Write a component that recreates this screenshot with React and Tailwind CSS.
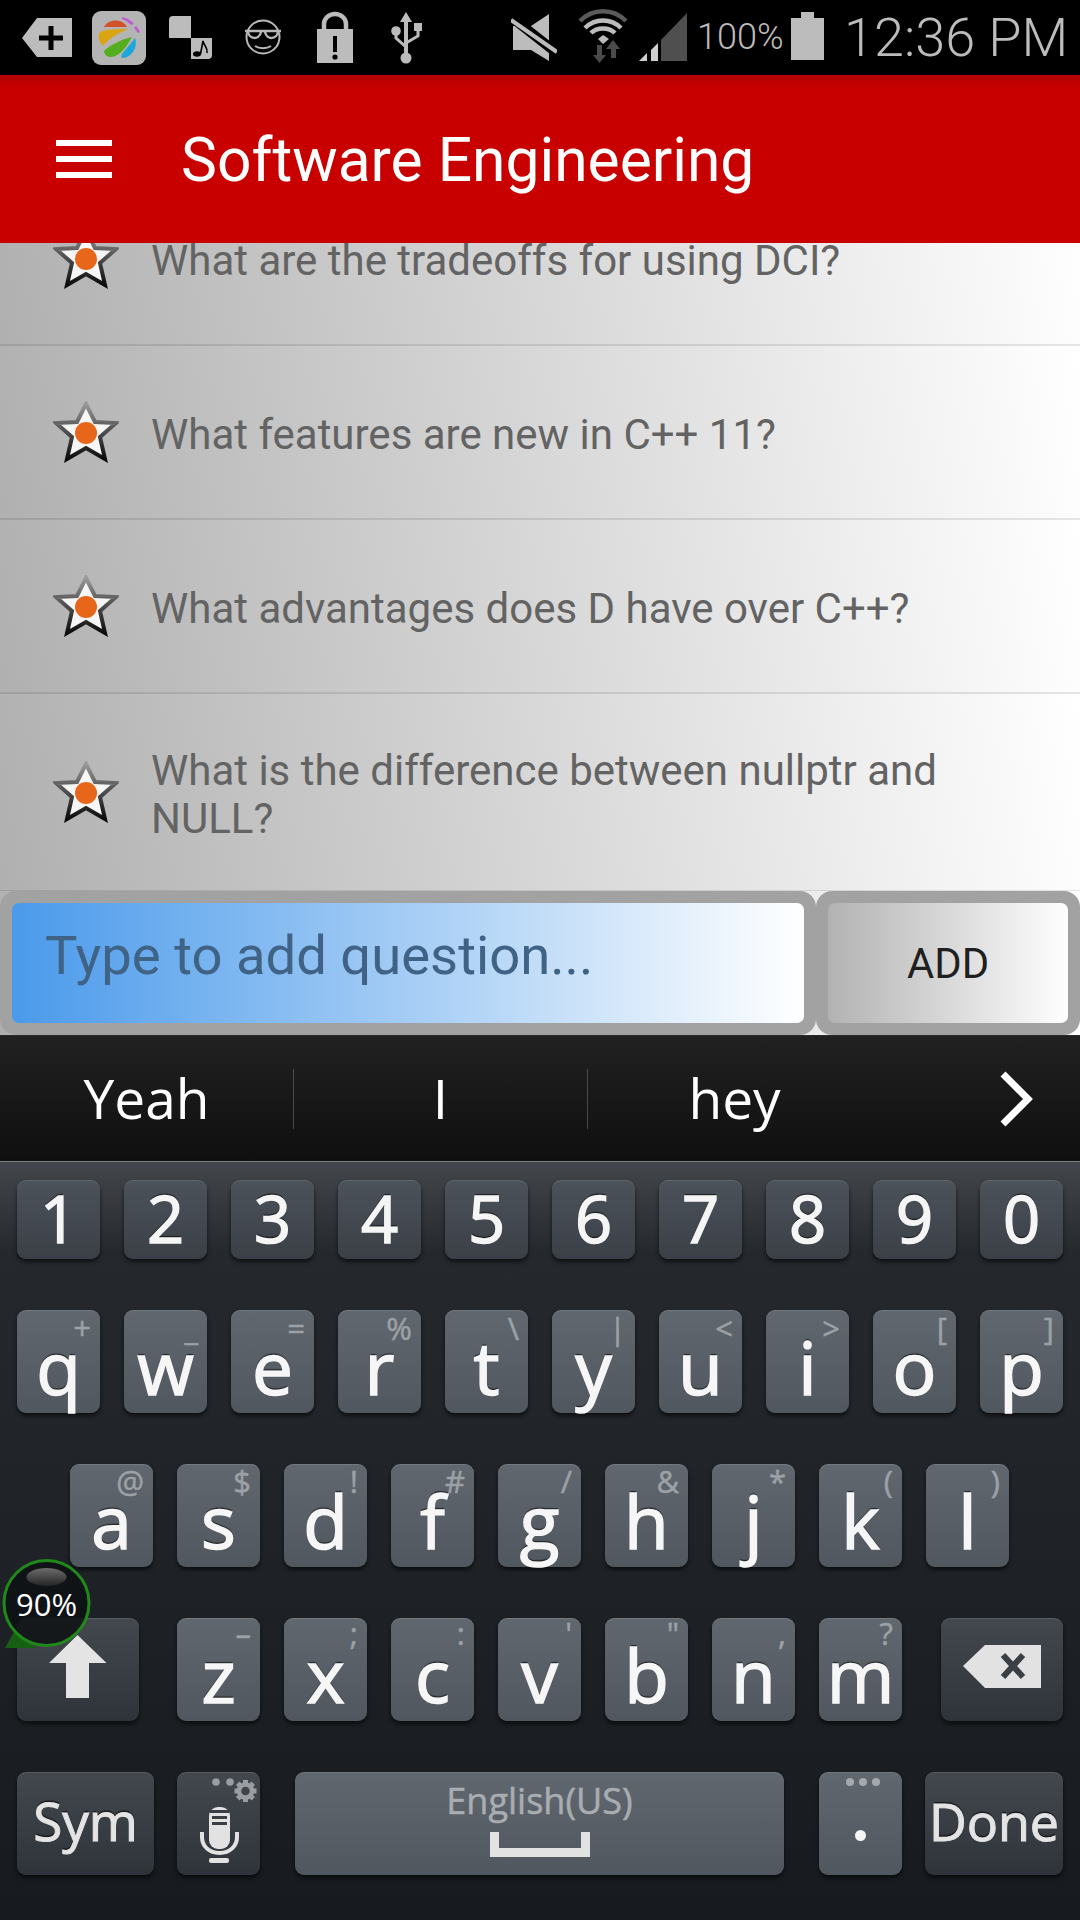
import React from "react";

const OPEN = "[font-family:'Open_Sans',sans-serif]";

function Star() {
  return (
    <svg width="66" height="62" viewBox="0 0 66 62" className="shrink-0 blur-[0.6px]">
      <defs>
        <linearGradient id="starEdge" x1="0" y1="0" x2="0" y2="1">
          <stop offset="0" stopColor="#9a9a9a" />
          <stop offset="0.45" stopColor="#555" />
          <stop offset="1" stopColor="#0c0c0c" />
        </linearGradient>
      </defs>
      <polygon
        points="33,3 42,21 63,22 47,36 52,58 33,47 14,58 19,36 3,22 24,21"
        fill="#f6f6f6"
        stroke="url(#starEdge)"
        strokeWidth="4"
        strokeLinejoin="miter"
      />
      <circle cx="33" cy="32" r="11" fill="#e8661a" />
    </svg>
  );
}

function Row({ children, className }) {
  return (
    <div className={"flex items-center shrink-0 border-b-2 border-black/10 bg-[linear-gradient(82deg,#b0b0b0,#ffffff)] " + className}>
      <div className="ml-[53px] mr-[32px]"><Star /></div>
      <div className="w-[810px] pt-[6px] text-[42px] leading-[48px] text-[#636363] [font-family:Roboto,sans-serif]">{children}</div>
    </div>
  );
}

const LETTER = "bg-[linear-gradient(#60676f,#50575e)]";
const NUM = "bg-[linear-gradient(#4c525a,#3b4047)]";
const FUNC = "bg-[linear-gradient(#43474e,#2f333a)]";
const KEYSHADOW = "shadow-[inset_0_1px_0_rgba(255,255,255,0.12),0_3px_4px_rgba(0,0,0,0.6)]";

function Digit({ c }) {
  return (
    <div className={`relative flex h-[79px] w-[83px] items-end justify-center rounded-[9px] pb-[8px] ${NUM} ${KEYSHADOW}`}>
      <span className={`${OPEN} text-[65px] leading-[65px] text-[#f5f5f5] [-webkit-text-stroke:1.5px_#f5f5f5] [text-shadow:0_-2px_1px_rgba(0,0,0,0.6)]`}>{c}</span>
    </div>
  );
}

function Letter({ c, h, top }) {
  return (
    <div className={`relative flex h-[103px] w-[83px] items-end justify-center rounded-[9px] pb-[10px] ${LETTER} ${KEYSHADOW}`}>
      <span className={`absolute right-[9px] ${top} ${OPEN} text-[31px] leading-[38px] text-[#9ca1a6] [-webkit-text-stroke:0.5px_#9ca1a6]`}>{h}</span>
      <span className={`relative ${OPEN} text-[73px] leading-[73px] text-[#f6f6f6] [-webkit-text-stroke:1.5px_#f6f6f6] [text-shadow:0_-2px_1px_rgba(0,0,0,0.6)]`}>{c}</span>
    </div>
  );
}

const row2 = [["q","+"],["w","_"],["e","="],["r","%"],["t","\\"],["y","|"],["u","<"],["i",">"],["o","["],["p","]"]];
const row3 = [["a","@"],["s","$"],["d","!"],["f","#"],["g","/"],["h","&"],["j","*"],["k","("],["l",")"]];
const row4 = [["z","–"],["x",";"],["c",":"],["v","'"],["b","\""],["n",","],["m","?"]];

function StatusIcons() {
  return (
    <>
      <svg width="50" height="75" viewBox="22 0 50 75" className="ml-[22px]">
        <polygon points="22,38 37,18 72,18 72,57 37,57" fill="#bcbcbc" />
        <path d="M39 38H63M51 26V50" stroke="#000" strokeWidth="5" />
      </svg>
      <svg width="54" height="75" viewBox="92 0 54 75" className="ml-[20px]">
        <rect x="92" y="11" width="54" height="54" rx="9" fill="#b4b4b4" />
        <path d="M104 27C108 19 122 18 127 27Z" fill="#d2532a" />
        <path d="M99 34C100 30 110 29 128 29C118 33 107 40 103 46C100 43 98 38 99 34Z" fill="#dba512" />
        <path d="M132 37C125 50 118 57 110 57C106 57 104 53 104 51C110 45 120 40 132 37Z" fill="#55ae1d" />
        <path d="M135 38C138 46 133 57 123 58C121 58 121 56 122 54C126 49 131 43 135 38Z" fill="#1fa6da" />
        <path d="M122 17C127 18 131 20 134 24L131 25C128 22 125 20 122 19Z" fill="#c25ad6" />
        <path d="M136 26C138 28 139 30 140 32L138 33L134 28Z" fill="#c25ad6" />
      </svg>
      <svg width="44" height="75" viewBox="169 0 44 75" className="ml-[23px]">
        <path d="M173 16H191V38H169V20A4 4 0 0 1 173 16Z" fill="#bcbcbc" />
        <path d="M191 38H212V55A4 4 0 0 1 208 59H191Z" fill="#bcbcbc" />
        <ellipse cx="197" cy="54" rx="4" ry="2.8" fill="#000" />
        <path d="M200.5 54L203 41C204 46 208 47 207 53" stroke="#000" strokeWidth="1.6" fill="none" />
      </svg>
      <svg width="38" height="75" viewBox="244 0 38 75" className="ml-[31px]">
        <circle cx="263" cy="37" r="16.5" fill="none" stroke="#b8b8b8" strokeWidth="2" />
        <path d="M245 31H281M248 31C248 39 259 41 261 32M265 32C267 41 278 39 278 31" fill="none" stroke="#b8b8b8" strokeWidth="2.4" />
        <path d="M255 46C259 49 267 49 271 46" fill="none" stroke="#b8b8b8" strokeWidth="2" />
      </svg>
      <svg width="36" height="75" viewBox="317 0 36 75" className="ml-[35px]">
        <path d="M324 30V24A11 10 0 0 1 346 24V30" fill="none" stroke="#bcbcbc" strokeWidth="4.5" />
        <rect x="317" y="29" width="36" height="34" fill="#bcbcbc" />
        <rect x="333" y="36" width="4" height="16" fill="#000" />
        <circle cx="335" cy="57" r="2.6" fill="#000" />
      </svg>
      <svg width="32" height="75" viewBox="391 0 32 75" className="ml-[38px]">
        <path d="M406 12L412 22H408V53H404V22H400Z" fill="#bcbcbc" />
        <circle cx="406" cy="58" r="5.5" fill="#bcbcbc" />
        <circle cx="396" cy="31" r="4.8" fill="#bcbcbc" />
        <rect x="414" y="23" width="8" height="8" fill="#bcbcbc" />
        <path d="M396 33V38L406 47M418 30V36L406 43" fill="none" stroke="#bcbcbc" strokeWidth="3" />
      </svg>
      <svg width="46" height="75" viewBox="511 0 46 75" className="ml-[88px]">
        <path d="M513 26H531L549 14V61L531 50H513Z" fill="#bcbcbc" />
        <path d="M511 17L557 53" stroke="#000" strokeWidth="10" />
        <path d="M511 20L557 52" stroke="#bcbcbc" strokeWidth="4" />
      </svg>
      <svg width="52" height="75" viewBox="577 0 52 75" className="ml-[20px]">
        <path d="M580 21C593 8 613 8 626 21" fill="none" stroke="#5a5a5a" strokeWidth="4.5" />
        <path d="M585 28C595 18 611 18 621 28" fill="none" stroke="#bcbcbc" strokeWidth="4.5" />
        <path d="M591 33C597 27 609 27 615 33" fill="none" stroke="#bcbcbc" strokeWidth="4.5" />
        <path d="M598 39L603 35L609 39L603 44Z" fill="#bcbcbc" />
        <path d="M597 45H602V55H606L599.5 63L593 55H597Z" fill="#4a4a4a" />
        <path d="M613 40L620 49H616V58H611V49H606Z" fill="#4a4a4a" />
      </svg>
      <svg width="48" height="75" viewBox="639 0 48 75" className="ml-[10px]">
        <path d="M639 61L647 53V61Z" fill="#cfcfcf" />
        <path d="M651 61V50L658 43V61Z" fill="#cfcfcf" />
        <path d="M661 61V40L687 13V61Z" fill="#4f4f4f" />
      </svg>
      <span className="ml-[10px] mt-[-1px] w-[85px] text-[36px] font-light text-[#bcbcbc] [font-family:Roboto,sans-serif]">100%</span>
      <svg width="33" height="75" viewBox="791 0 33 75" className="ml-[9px]">
        <path d="M801 12H814V18H824V60H791V18H801Z" fill="#bcbcbc" />
      </svg>
      <span className="ml-[20px] whitespace-nowrap text-[54px] font-light text-[#bcbcbc] [font-family:Roboto,sans-serif]">12:36 PM</span>
    </>
  );
}

function Gear() {
  const teeth = [0, 45, 90, 135, 180, 225, 270, 315];
  return (
    <g>
      <circle cx="68.5" cy="19" r="6.5" fill="none" stroke="#9a9da1" strokeWidth="4.5" />
      {teeth.map((a) => (
        <rect key={a} x="66" y="8" width="5" height="5" fill="#9a9da1" transform={`rotate(${a} 68.5 19)`} />
      ))}
    </g>
  );
}

export default function App() {
  return (
    <div className="relative flex h-[1920px] w-[1080px] flex-col overflow-hidden bg-black">
      {/* status bar */}
      <div className="flex h-[75px] shrink-0 items-center bg-black">
        <StatusIcons />
      </div>

      {/* app bar */}
      <div className="z-10 flex h-[168px] shrink-0 items-center bg-[linear-gradient(#b40000,#c80000_14px)]">
        <div className="ml-[56px] flex w-[56px] flex-col gap-[10px]">
          <div className="h-[6px] bg-white" />
          <div className="h-[6px] bg-white" />
          <div className="h-[6px] bg-white" />
        </div>
        <div className="ml-[69px] pt-[4px] text-[60.5px] text-white [font-family:Roboto,sans-serif]">Software Engineering</div>
      </div>

      {/* list */}
      <div className="flex h-[648px] shrink-0 flex-col overflow-hidden">
        <Row className="mt-[-71px] h-[174px]">What are the tradeoffs for using DCI?</Row>
        <Row className="h-[174px]">What features are new in C++ 11?</Row>
        <Row className="h-[174px]">What advantages does D have over C++?</Row>
        <Row className="h-[198px]">What is the difference between nullptr and NULL?</Row>
      </div>

      {/* input row */}
      <div className="flex h-[144px] shrink-0 bg-[linear-gradient(82deg,#b0b0b0,#ffffff)]">
        <div className="w-[816px] rounded-[16px] bg-[#a2a2a2] p-[12px]">
          <div className="flex h-full items-center rounded-[7px] bg-[linear-gradient(90deg,#4a9aeb,#ffffff)] pb-[14px] pl-[33px]">
            <span className="text-[54.4px] leading-none text-[#3f6285] [font-family:Roboto,sans-serif]">Type to add question...</span>
          </div>
        </div>
        <div className="w-[264px] rounded-[16px] bg-[#a2a2a2] p-[12px]">
          <div className="flex h-full items-center justify-center rounded-[7px] bg-[linear-gradient(90deg,#b2b2b2,#ffffff)] pt-[3px]">
            <span className="text-[41.8px] text-[#1f1f1f] [font-family:Roboto,sans-serif]">ADD</span>
          </div>
        </div>
      </div>

      {/* suggestions */}
      <div className="flex h-[126px] shrink-0 items-center border-t border-[#2a2a2a] bg-[linear-gradient(#212121,#0f0f0f)] text-white">
        <div className={`w-[293px] text-center ${OPEN} text-[55px]`}>Yeah</div>
        <div className="h-[60px] w-px bg-[#4a4a4a]" />
        <div className={`w-[293px] text-center ${OPEN} text-[55px]`}>I</div>
        <div className="h-[60px] w-px bg-[#4a4a4a]" />
        <div className={`w-[293px] text-center ${OPEN} text-[55px]`}>hey</div>
        <svg width="34" height="56" viewBox="0 0 34 56" className="ml-[119px]">
          <path d="M3 3L28 28L3 53" fill="none" stroke="#fff" strokeWidth="7" />
        </svg>
      </div>

      {/* keyboard */}
      <div className="flex flex-1 flex-col gap-[51px] border-t border-[#7a7d80] bg-[linear-gradient(#43474b,#25292d_12%,#171b1f)] pt-[18px]">
        <div className="flex gap-[24px] px-[17px]">
          {"1234567890".split("").map((c) => <Digit key={c} c={c} />)}
        </div>
        <div className="flex gap-[24px] px-[17px]">
          {row2.map(([c, h]) => <Letter key={c} c={c} h={h} top="top-[-1px]" />)}
        </div>
        <div className="flex gap-[24px] pl-[70px]">
          {row3.map(([c, h]) => <Letter key={c} c={c} h={h} top="top-[-2px]" />)}
        </div>
        <div className="flex px-[17px]">
          <div className={`flex h-[103px] w-[122px] items-start justify-center rounded-[9px] pt-[17px] ${FUNC} ${KEYSHADOW}`}>
            <svg width="58" height="63" viewBox="0 0 58 63">
              <path d="M28.5 0L57.5 28H40V63H17V28H0Z" fill="#e4e4e4" />
            </svg>
          </div>
          <div className="ml-[38px] flex gap-[24px]">
            {row4.map(([c, h]) => <Letter key={c} c={c} h={h} top="top-[-4px]" />)}
          </div>
          <div className={`ml-[39px] flex h-[103px] w-[122px] items-start justify-center rounded-[9px] pt-[27px] ${FUNC} ${KEYSHADOW}`}>
            <svg width="80" height="44" viewBox="0 0 80 44">
              <path d="M23 0H79V43H23L1 21Z" fill="#e2e2e2" />
              <path d="M40 9L60 31M60 9L40 31" stroke="#3a3e45" strokeWidth="6" transform="translate(1,1)" />
            </svg>
          </div>
        </div>
        <div className="flex px-[17px]">
          <div className={`flex h-[103px] w-[137px] items-center justify-center rounded-[9px] pb-[6px] ${FUNC} ${KEYSHADOW}`}>
            <span className={`${OPEN} text-[53px] text-[#e4e4e4] [-webkit-text-stroke:1px_#e4e4e4] [text-shadow:0_-2px_1px_rgba(0,0,0,0.6)]`}>Sym</span>
          </div>
          <div className={`ml-[23px] h-[103px] w-[83px] rounded-[9px] ${FUNC} ${KEYSHADOW}`}>
            <svg width="83" height="103" viewBox="0 0 83 103">
              <circle cx="39" cy="10" r="3.8" fill="#9a9da1" />
              <circle cx="53" cy="10" r="3.8" fill="#9a9da1" />
              <Gear />
              <rect x="32" y="35" width="21" height="42" rx="9" fill="#e2e2e2" />
              <rect x="33" y="38" width="19" height="3" fill="#3a3e45" />
              <rect x="35" y="44" width="15" height="3" fill="#3a3e45" />
              <rect x="35" y="50" width="15" height="3" fill="#3a3e45" />
              <path d="M25 60V65C25 74 32 81 42.5 81C53 81 60 74 60 65V60" fill="none" stroke="#e2e2e2" strokeWidth="4" />
              <rect x="32" y="86" width="20" height="5" rx="2" fill="#e2e2e2" />
            </svg>
          </div>
          <div className={`ml-[35px] flex h-[103px] w-[489px] flex-col items-center rounded-[9px] pt-[6px] ${LETTER} ${KEYSHADOW}`}>
            <span className={`${OPEN} text-[36px] leading-[46px] text-[#a9adb1] [-webkit-text-stroke:0.5px_#a9adb1]`}>English(US)</span>
            <div className="mt-[8px] h-[25px] w-[100px] border-x-[9px] border-b-[9px] border-[#e2e2e2]" />
          </div>
          <div className={`ml-[35px] flex h-[103px] w-[83px] flex-col items-center rounded-[9px] pt-[6px] ${LETTER} ${KEYSHADOW}`}>
            <div className="flex gap-[5px] pl-[4px]">
              <div className="h-[8px] w-[8px] rounded-full bg-[#a5a9ad]" />
              <div className="h-[8px] w-[8px] rounded-full bg-[#a5a9ad]" />
              <div className="h-[8px] w-[8px] rounded-full bg-[#a5a9ad]" />
            </div>
            <div className="mt-[44px] h-[11px] w-[11px] rounded-full bg-[#f6f6f6]" />
          </div>
          <div className={`ml-[23px] flex h-[103px] w-[138px] items-center justify-center rounded-[9px] pb-[6px] ${FUNC} ${KEYSHADOW}`}>
            <span className={`${OPEN} text-[52px] text-[#e4e4e4] [-webkit-text-stroke:1px_#e4e4e4] [text-shadow:0_-2px_1px_rgba(0,0,0,0.6)]`}>Done</span>
          </div>
        </div>
      </div>

      {/* floating battery bubble */}
      <div className="absolute left-0 top-[1555px] h-[100px] w-[95px]">
        <svg width="95" height="100" viewBox="0 1555 95 100" className="absolute inset-0">
          <defs>
            <linearGradient id="gloss" x1="0" y1="0" x2="0" y2="1">
              <stop offset="0" stopColor="#6c6c6c" />
              <stop offset="1" stopColor="#242424" />
            </linearGradient>
          </defs>
          <polygon points="14,1632 5,1648 36,1648" fill="#176012" />
          <circle cx="46.5" cy="1603" r="42.5" fill="rgba(14,18,20,0.86)" stroke="#1f8a1a" strokeWidth="3" />
          <ellipse cx="46.5" cy="1577" rx="20" ry="9" fill="url(#gloss)" />
        </svg>
        <div className={`absolute left-0 top-[27px] w-[93px] text-center ${OPEN} text-[31px] leading-[44px] text-white`}>90%</div>
      </div>
    </div>
  );
}
